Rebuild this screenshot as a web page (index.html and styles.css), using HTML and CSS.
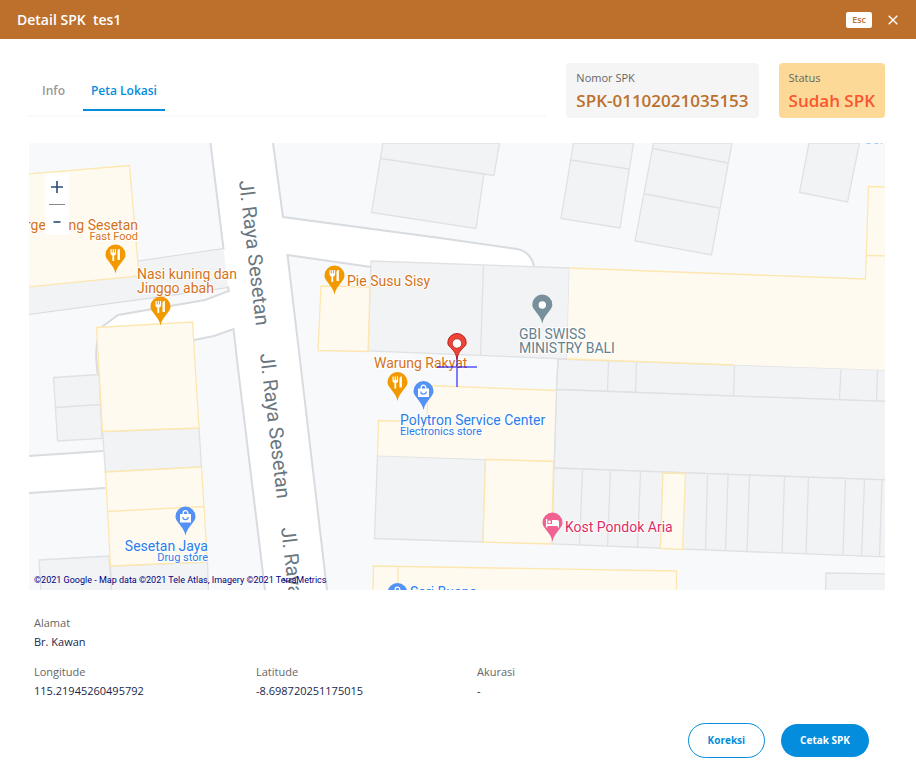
FILE: index.html
```html
<!DOCTYPE html>
<html lang="id">
<head>
<meta charset="utf-8">
<meta name="viewport" content="width=device-width, initial-scale=1">
<title>Detail SPK</title>
<link rel="stylesheet" href="styles.css">
</head>
<body>
<header class="titlebar">
  <h1 class="title">Detail SPK&nbsp; tes1</h1>
  <button class="esc" type="button">Esc</button>
  <button class="close" type="button" aria-label="Tutup">
    <svg width="10" height="10" viewBox="0 0 10 10"><path d="M.7.7l8.6 8.6M9.3.7L.7 9.3" fill="none" stroke="#fff" stroke-width="1.4"/></svg>
  </button>
</header>
<main class="content">
  <div class="summary">
    <nav class="tabs">
      <a class="tab" href="#info">Info</a>
      <a class="tab tab-active" href="#peta" aria-current="page">Peta Lokasi</a>
    </nav>
    <div class="card">
      <span class="card-label">Nomor SPK</span>
      <strong class="card-value">SPK-01102021035153</strong>
    </div>
    <div class="card card-status">
      <span class="card-label">Status</span>
      <strong class="card-value">Sudah SPK</strong>
    </div>
  </div>

  <section class="map" aria-label="Peta Lokasi">
    <svg class="map-canvas" viewBox="29 143 856 447">
      <defs>
        <path id="pin" d="M0 0C-1-5-3.500-8-7-12.500C-9-15-10-16.500-10-19A10 10 0 0 1 10-19C10-16.500 9-15 7-12.500C3.500-8 1-5 0 0Z"/>
        <g id="food" fill="#fff"><path d="M-5-24.500h1.200v3.500h1v-3.500h1.200v3.500h1v-3.500H.600v4.200c0 1.300-.8 2-1.900 2.300v5.500h-1.800V-18C-4.200-18.300-5-19-5-20.300Z"/><path d="M2-13.500v-8.500c0-1.700.9-2.500 2.400-2.700v11.200Z"/></g>
        <g id="bag"><path d="M-5.500-21.500h11v8.500h-11Z" fill="#fff"/><path d="M-2.300-21v-1.500a2.300 2.300 0 0 1 4.600 0v1.500" fill="none" stroke="#fff" stroke-width="1.300"/><path d="M-2.700-18.500a2.700 2.700 0 0 0 5.400 0" fill="none" stroke="#5491f5" stroke-width="1.200"/></g>
      </defs>
      <rect x="29" y="143" width="856" height="447" fill="#f8f9fb"/>

      <g class="road">
        <path d="M210.500 143L223.500 249L228 288L229 291L205 300L118 315L102 327Q93 345 98 375H190L194 340L214 336L233.500 329L237 360L265 590H327L300 360L287.500 255L371 267V261L534 266Q530 251 517 249L440 238L283 217L273 143Z"/>
        <path d="M29 456L103 451L105 488L29 493Z"/>
      </g>
      <g class="edge">
        <path d="M210.500 143L223.500 249L138 261.500M29 314L152 297.500L228 287L229 291L205 300L118 315L102 327Q93 345 98 375M194 340L214 336L233.500 329L237 360L265 590M273 143L283 217L440 238L517 249Q530 251 534 266M371 267L287.500 255L300 360L327 590M29 456L103 451M29 493L105 488"/>
      </g>

      <g class="plot">
        <path class="plain" d="M29 287L139 276L138 261.500L223.500 249L228 287L29 314Z"/>
        <path d="M383 143L499.500 143L494 175.500L484 174L476 228.500L371.500 212.500ZM381 158.500L484 174"/>
        <path d="M573.500 143H633.500L620 228L561 218.500ZM571 160L629 169"/>
        <path d="M653.500 143H732L711.500 255L635 241ZM653 148.500L728 163M645 194L719 208"/>
        <path d="M809 143H859.500L847.500 202L799.500 192.500Z"/>
        <path d="M371 261L569.500 268L567 359L368 351ZM483.500 265L480.500 356"/>
        <path d="M558 359L887 370V401.500L556.500 389.500ZM608.500 361L607.500 391.500M636.500 362L635.500 392M734.500 365L733.500 395M841 369L839.500 399M877.500 370L876.500 400"/>
        <path d="M556.500 389.500L887 401.500V480L554 468Z"/>
        <path d="M554 468L887 480V557L552 544ZM582.500 470L579.500 545.500M610.500 471L607.500 546.500M640.500 472L637.500 547.500M663 473L660.500 548.500M707.500 475L705.500 550M728 475.500L725.500 551M749.500 476L747 552M784.500 477L782 553M808.500 478L806 553M845.500 479.500L843 554M864.500 480L861.500 556M882 480L879.500 556"/>
        <path d="M377.500 455.500L485.500 459.500L483 542L374.500 538.500Z"/>
        <path d="M826 573L887 574V592H825.500Z"/>
        <path d="M53.500 377.500L99 374.500L102 438.500L57.500 441ZM55.500 407.500L101 404.500"/>
        <path d="M102.500 431.500L199 428L201.500 467L105.500 472Z"/>
        <path d="M110.500 566L207.500 562L208.500 592H111.500Z"/>
        <path d="M39 560L109 556L111.500 592H41Z"/>
      </g>
      <g class="shop">
        <path class="plain" d="M569.500 268L865.500 279L868.500 186.500L885 187V370L567 359Z"/>
        <path class="outline" d="M569.500 268L865.500 279L868.500 186.500L887 187M867 255.500L887 256M567 359L734 365"/>
        <path d="M321 286L370 287L368 351.500L318 350.500Z"/>
        <path class="plain" d="M428 385.500L556.500 390.500L553.500 461.500L377.500 455.500L378.500 420.500L427 422Z"/>
        <path class="outline" d="M553.500 461.500L485.500 459.500M377.500 455.500L378.500 420.500L427 422L428 385.500L556.500 390.500"/>
        <path d="M485.500 459.500L553.500 461.500L551.500 544L483 542Z"/>
        <path d="M663 473L685.500 473.500L682.500 549.500L660.500 548.500Z"/>
        <path d="M373.500 566L676.500 571V592H373ZM398 567V590"/>
        <path d="M27 174L129.500 165.500L139 276L27 287Z"/>
        <path d="M96.500 327.500L192.500 322L199 428L102.500 431.500Z"/>
        <path d="M105.500 472L201.500 467L207.500 562L110.500 566ZM107.500 511.500L203.500 506.500"/>
      </g>
      <path class="boundary" d="M558 359L556.500 390L554 468"/>

      <g class="street">
        <text transform="translate(239 181) rotate(83.300)">Jl. Raya Sesetan</text>
        <text transform="translate(260 354) rotate(83.300)">Jl. Raya Sesetan</text>
        <text transform="translate(281 528) rotate(83.300)">Jl. Raya Sesetan</text>
      </g>

      <g class="poi food">
        <text x="26" y="230">rge</text>
        <text x="138" y="230" text-anchor="end">ng Sesetan</text>
        <text class="sub" x="138" y="240" text-anchor="end">Fast Food</text>
        <text x="137" y="279">Nasi kuning dan</text>
        <text x="137" y="293">Jinggo abah</text>
        <text x="347" y="286">Pie Susu Sisy</text>
        <text x="374" y="368">Warung Rakyat</text>
      </g>
      <g class="poi store">
        <text x="400" y="425">Polytron Service Center</text>
        <text class="sub" x="400" y="435">Electronics store</text>
        <text x="208" y="551" text-anchor="end">Sesetan Jaya</text>
        <text class="sub" x="208" y="561" text-anchor="end">Drug store</text>
        <text x="410" y="597">Sari Buana</text>
        <text class="faint" x="864" y="144">Sei</text>
      </g>
      <g class="poi church">
        <text x="519" y="339">GBI SWISS</text>
        <text x="519" y="353">MINISTRY BALI</text>
      </g>
      <g class="poi lodging"><text x="565" y="532">Kost Pondok Aria</text></g>

      <g fill="#f29900">
        <g transform="translate(115.500 273.500)"><use href="#pin"/><use href="#food"/></g>
        <g transform="translate(160.500 325.500)"><use href="#pin"/><use href="#food"/></g>
        <g transform="translate(334.500 294.500)"><use href="#pin"/><use href="#food"/></g>
        <g transform="translate(397.500 401)"><use href="#pin"/><use href="#food"/></g>
      </g>
      <g fill="#5491f5">
        <g transform="translate(423.500 410)"><use href="#pin"/><use href="#bag"/></g>
        <g transform="translate(185.500 535.500)"><use href="#pin"/><use href="#bag"/></g>
        <g transform="translate(397.500 612)"><use href="#pin"/><use href="#bag"/></g>
      </g>
      <g transform="translate(542.300 323.500)"><use href="#pin" fill="#78909c"/><circle cy="-18.500" r="3.700" fill="#fff"/></g>
      <g transform="translate(552.500 541.500)"><use href="#pin" fill="#f06292"/><path d="M-6.500-22.500h1.300v5H-.5v-4H4.500a2 2 0 0 1 2 2v5.500H5.200v-1.500H-5.200v1.500h-1.300Z" fill="#fff"/><circle cx="-3" cy="-19.500" r="1.400" fill="#fff"/></g>

      <path d="M437 367H477M457 347V387" fill="none" stroke="#00f" stroke-opacity=".5" stroke-width="2"/>
      <path d="M457 359.500C456 353 454 351 450.500 347.500C448.500 345.500 447.800 344.500 447.800 342.500A9.200 9 0 0 1 466.200 342.500C466.200 344.500 465.500 345.500 463.500 347.500C460 351 458 353 457 359.500Z" fill="#ee4438" stroke="#b31412" stroke-width=".9"/>
      <circle cx="457" cy="343.500" r="4.700" fill="#fff" stroke="#b31412" stroke-width=".7"/>
    </svg>
    <div class="zoom">
      <button class="zoom-button zoom-in" type="button" aria-label="Perbesar"><svg width="12" height="12" viewBox="0 0 12 12"><path d="M0 6h12M6 0v12" stroke="#2b4c78" stroke-width="1.600"/></svg></button>
      <button class="zoom-button zoom-out" type="button" aria-label="Perkecil"><svg width="12" height="12" viewBox="0 0 12 12"><path d="M2.500 6h7" stroke="#2b4c78" stroke-width="1.600"/></svg></button>
    </div>
    <small class="credit">©2021 Google - Map data ©2021 Tele Atlas, Imagery ©2021 TerraMetrics</small>
  </section>

  <dl class="details">
    <div class="field field-wide"><dt>Alamat</dt><dd>Br. Kawan</dd></div>
    <div class="field"><dt>Longitude</dt><dd>115.21945260495792</dd></div>
    <div class="field"><dt>Latitude</dt><dd>-8.698720251175015</dd></div>
    <div class="field"><dt>Akurasi</dt><dd>-</dd></div>
  </dl>

  <footer class="actions">
    <button class="button button-outline" type="button">Koreksi</button>
    <button class="button" type="button">Cetak SPK</button>
  </footer>
</main>
</body>
</html>
```
FILE: styles.css
```css
* { box-sizing: border-box; }

body {
  margin: 0;
  background: #fff;
  color: #20264a;
  font: 11px/19px "Open Sans", "Noto Sans", sans-serif;
}

button {
  font-family: inherit;
  border: 0;
  padding: 0;
  cursor: pointer;
}

.titlebar {
  display: flex;
  align-items: center;
  height: 39px;
  padding: 0 17px;
  background: #bc702c;
  color: #fff;
}

.title {
  flex: 1;
  margin: 0;
  font-size: 14px;
  font-weight: 600;
}

.esc {
  padding: 0 6px;
  border-radius: 2px;
  background: #fff;
  color: #bc702c;
  font-size: 9px;
  font-weight: 600;
  line-height: 16px;
}

.close {
  display: flex;
  margin-left: 15px;
  padding: 1px;
  background: none;
}

.content { padding: 24px 31px 24px 29px; }

.summary {
  display: flex;
  gap: 20px;
  align-items: flex-end;
}

.tabs {
  display: flex;
  flex: 1;
  gap: 10px;
  margin-bottom: 1px;
  padding-bottom: 4px;
  border-bottom: 2px solid #f9f9f9;
}

.tab {
  padding: 0 8px 8px;
  border-bottom: 2px solid transparent;
  color: #999;
  font-size: 12px;
  font-weight: 600;
  line-height: 20px;
  text-decoration: none;
}

.tab:first-child { margin-left: 5px; }

.tab-active {
  border-color: #048ddd;
  color: #048ddd;
}

.card {
  display: flex;
  flex-direction: column;
  padding: 5px 10px;
  border-radius: 4px;
  background: #f5f5f5;
  color: #bc702c;
}

.card-status {
  background: #fdd997;
  color: #f9552f;
}

.card-label {
  color: #666;
  line-height: 20px;
}

.card-value {
  font-size: 17px;
  font-weight: 600;
  line-height: 25px;
}

.map {
  position: relative;
  margin-top: 25px;
}

.map-canvas {
  display: block;
  width: 100%;
  overflow: hidden;
}

.road { fill: #fff; }
.edge { fill: none; stroke: #d8dbdf; stroke-width: 2; }
.plot { fill: #f1f3f4; stroke: #dfe1e4; stroke-width: 1.3; }
.shop { fill: #fffaef; stroke: #fde7b0; stroke-width: 1.3; }
.boundary { fill: none; stroke: #dfe1e4; stroke-width: 1.3; }
.plain { stroke: none; }
.outline { fill: none; }

.street {
  fill: #6b7780;
  font: 20px Roboto, sans-serif;
}

.poi {
  font: 14px Roboto, sans-serif;
  paint-order: stroke;
  stroke: #fff;
  stroke-width: 2;
  stroke-linejoin: round;
}

.sub { font-size: 11px; }
.food { fill: #d5731a; }
.store { fill: #2b7de9; }
.church { fill: #687f8c; }
.lodging { fill: #dc2c68; }
.faint { opacity: .4; }

.zoom {
  position: absolute;
  top: 30px;
  left: 16px;
  display: flex;
  flex-direction: column;
  width: 24px;
  padding: 0 4px;
  background: #fff;
}

.zoom-button {
  display: flex;
  align-items: center;
  justify-content: center;
  height: 31px;
  background: none;
}

.zoom-in { padding-bottom: 4px; }

.zoom-out {
  padding-top: 4px;
  border-top: 1px solid #888;
}

.credit {
  position: absolute;
  bottom: 2px;
  left: 5px;
  color: #000080;
  font: 9px/16px Roboto, sans-serif;
}

.details {
  display: grid;
  grid-template-columns: 222px 221px 1fr;
  row-gap: 11px;
  margin: 23px 5px 0;
}

.field-wide { grid-column: 1 / -1; }
.field dt { color: #666; }
.field dd { margin: 0; }

.actions {
  display: flex;
  align-items: center;
  justify-content: flex-end;
  gap: 16px;
  margin: 23px 16px 0 0;
}

.button {
  padding: 0 19px;
  border-radius: 18px;
  background: #048ddd;
  color: #fff;
  font-size: 10px;
  font-weight: 700;
  line-height: 33px;
}

.button-outline {
  border: 1px solid #048ddd;
  background: #fff;
  color: #048ddd;
}
```
